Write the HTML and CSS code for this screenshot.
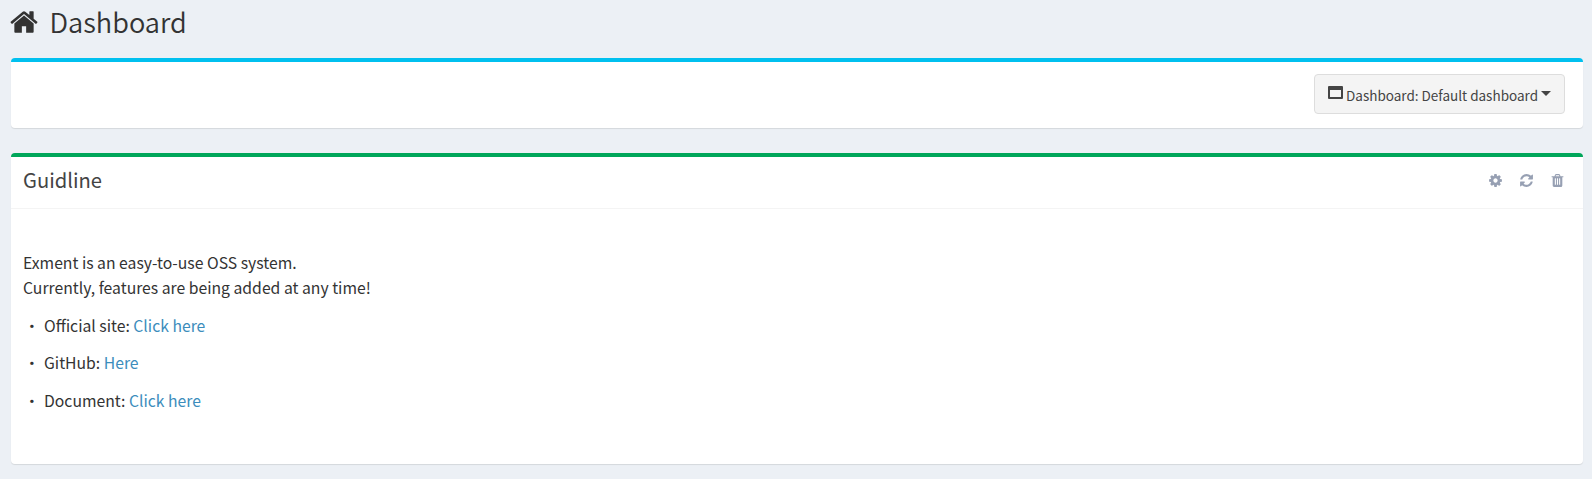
FILE: index.html
```
<!DOCTYPE html>
<html lang="en">
<head>
<meta charset="utf-8">
<title>Dashboard</title>
<link rel="stylesheet" href="styles.css">
</head>
<body>
<header class="page-header">
  <svg class="home-icon" viewBox="0 0 1792 1792"><path d="M1472 992v480q0 26-19 45t-45 19h-384v-384h-256v384h-384q-26 0-45-19t-19-45v-480q0-1 .5-3t.5-3l575-474 575 474q1 2 1 6zm223-69l-62 74q-8 9-21 11h-3q-13 0-21-7l-692-577-692 577q-12 8-24 7-13-2-21-11l-62-74q-8-10-7-23.500t11-21.500l719-599q32-26 76-26t76 26l244 204v-195q0-14 9-23t23-9h192q14 0 23 9t9 23v408l219 182q10 8 11 21.500t-7 23.500z"/></svg>
  <h1 class="page-title">Dashboard</h1>
</header>
<main>
  <section class="box box-info toolbar">
    <button class="dashboard-button" type="button">
      <svg class="window-icon" viewBox="0 0 15 13"><path fill-rule="evenodd" d="M1 0h13a1 1 0 0 1 1 1v11a1 1 0 0 1-1 1H1a1 1 0 0 1-1-1V1a1 1 0 0 1 1-1zm1 4v7h11V4z"/></svg>
      <span class="button-label">Dashboard: Default dashboard</span>
      <span class="caret"></span>
    </button>
  </section>
  <section class="box box-success guideline">
    <div class="box-header">
      <h2 class="box-title">Guidline</h2>
      <div class="box-tools">
        <svg class="tool-icon" viewBox="0 0 1792 1792"><path d="M1152 896q0-106-75-181t-181-75-181 75-75 181 75 181 181 75 181-75 75-181zm512-109v222q0 12-8 23t-20 13l-185 28q-19 54-39 91 35 50 107 138 10 12 10 25t-9 23q-27 37-99 108t-94 71q-12 0-26-9l-138-108q-44 23-91 38-16 136-29 186-7 28-36 28h-222q-14 0-24.500-8.500t-11.500-21.500l-28-184q-49-16-90-37l-141 107q-10 9-25 9-14 0-25-11-126-114-165-168-7-10-7-23 0-12 8-23 15-21 51-66.500t54-70.500q-27-50-41-99l-183-27q-13-2-21-12.500t-8-23.500v-222q0-12 8-23t19-13l186-28q14-46 39-92-40-57-107-138-10-12-10-24 0-10 9-23 26-36 98.500-107.500t94.500-71.500q13 0 26 10l138 107q44-23 91-38 16-136 29-186 7-28 36-28h222q14 0 24.500 8.500t11.500 21.500l28 184q49 16 90 37l142-107q9-9 24-9 13 0 25 10 129 119 165 170 7 8 7 22 0 12-8 23-15 21-51 66.500t-54 70.500q26 50 41 98l183 28q13 2 21 12.500t8 23.500z"/></svg>
        <svg class="tool-icon" viewBox="0 0 1792 1792"><path d="M1639 1056q0 5-1 7-64 268-268 434.500t-478 166.500q-146 0-282.500-55t-243.500-157l-129 129q-19 19-45 19t-45-19-19-45v-448q0-26 19-45t45-19h448q26 0 45 19t19 45-19 45l-137 137q71 66 161 102t187 36q134 0 250-65t186-179q11-17 53-117 8-23 30-23h192q13 0 22.500 9.500t9.500 22.500zm25-800v448q0 26-19 45t-45 19h-448q-26 0-45-19t-19-45 19-45l138-138q-148-137-349-137-134 0-250 65t-186 179q-11 17-53 117-8 23-30 23h-199q-13 0-22.500-9.500t-9.500-22.500v-7q65-268 270-434.500t480-166.500q146 0 284 55.500t245 156.500l130-129q19-19 45-19t45 19 19 45z"/></svg>
        <svg class="tool-icon" viewBox="0 0 1792 1792"><path d="M704 1376v-704q0-14-9-23t-23-9h-64q-14 0-23 9t-9 23v704q0 14 9 23t23 9h64q14 0 23-9t9-23zm256 0v-704q0-14-9-23t-23-9h-64q-14 0-23 9t-9 23v704q0 14 9 23t23 9h64q14 0 23-9t9-23zm256 0v-704q0-14-9-23t-23-9h-64q-14 0-23 9t-9 23v704q0 14 9 23t23 9h64q14 0 23-9t9-23zm-544-992h448l-48-117q-7-9-17-11h-317q-10 2-17 11zm928 32v64q0 14-9 23t-23 9h-96v948q0 83-47 143.500t-113 60.500h-832q-66 0-113-58.500t-47-141.500v-952h-96q-14 0-23-9t-9-23v-64q0-14 9-23t23-9h309l70-167q15-37 54-63t79-26h320q40 0 79 26t54 63l70 167h309q14 0 23 9t9 23z"/></svg>
      </div>
    </div>
    <div class="box-body">
      <p class="intro">Exment is an easy-to-use OSS system.<br>Currently, features are being added at any time!</p>
      <p class="item"><span class="bullet">・</span>Official site: <a class="link" href="#">Click here</a></p>
      <p class="item"><span class="bullet">・</span>GitHub: <a class="link" href="#">Here</a></p>
      <p class="item"><span class="bullet">・</span>Document: <a class="link" href="#">Click here</a></p>
    </div>
  </section>
</main>
</body>
</html>
```
FILE: styles.css
```
* { box-sizing: border-box; }
body {
  margin: 0;
  padding: 0 9px 0 11px;
  height: 479px;
  overflow: hidden;
  background: #ecf0f5;
  color: #333;
  font-family: "Source Sans Pro", "Noto Sans CJK JP", sans-serif;
  font-size: 15.74px;
  line-height: 25px;
}
svg { display: block; fill: currentColor; flex: none; }
h1, h2, p { margin: 0; font-weight: 400; }
.page-header { height: 58px; display: flex; align-items: flex-start; }
.home-icon { width: 30px; height: 30px; margin: 7px 0 0 -2px; }
.page-title { margin: 4px 0 0 10.500px; font-size: 27.2px; line-height: 34px; font-weight: 350; }
.box {
  background: #fff;
  border-radius: 4px;
  border-top: 4px solid #d2d6de;
  box-shadow: 0 1px 1px rgba(0, 0, 0, .1);
}
.box-info { border-top-color: #00c0ef; }
.box-success { border-top-color: #00a65a; }
.toolbar { height: 70px; margin-bottom: 25px; padding: 12px 18px 0 0; display: flex; justify-content: flex-end; align-items: flex-start; }
.dashboard-button {
  width: 251px;
  height: 40px;
  padding: 0 13px;
  display: flex;
  align-items: center;
  border: 1px solid #ddd;
  border-radius: 4px;
  background: #f4f4f4;
  color: #444;
  font: 400 13.5px/20px "Source Sans Pro", "Noto Sans CJK JP", sans-serif;
  white-space: nowrap;
}
.window-icon { width: 15px; height: 13px; margin: -3px 3px 0 0; }
.button-label { margin-top: 1px; }
.caret { margin: -1px 0 0 3px; border: 5px solid transparent; border-top-color: #444; border-bottom: 0; }
.guideline { height: 311px; }
.box-header {
  height: 52px;
  padding: 0 18px 4px 12px;
  display: flex;
  align-items: center;
  justify-content: space-between;
  border-bottom: 1px solid #f4f4f4;
  color: #444;
}
.box-title { margin-top: -2px; font-size: 20.2px; line-height: 24px; }
.box-tools { display: flex; gap: 16px; color: #97a0b3; }
.tool-icon { width: 15px; height: 15px; }
.box-body { padding: 41px 12px 0; }
.intro { margin-bottom: 12.500px; }
.item { margin-bottom: 12.500px; }
.bullet { display: inline-block; width: 21px; text-indent: 1px; }
.link { color: #3c8dbc; text-decoration: none; }
```
